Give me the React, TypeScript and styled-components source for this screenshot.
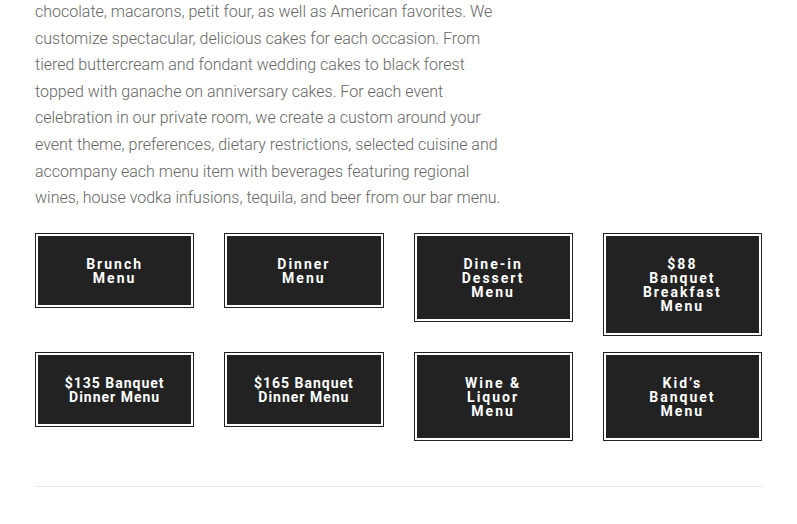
import { Fragment } from "react"
import styled, { createGlobalStyle } from "styled-components"

const GlobalStyle = createGlobalStyle`
body{
    margin: 0;
    background-color: #fff;
    font-family: Roboto, "Liberation Sans", sans-serif;
}
`

const menus = [
    { lines: ["Brunch", "Menu"] },
    { lines: ["Dinner", "Menu"] },
    { lines: ["Dine-in", "Dessert", "Menu"] },
    { lines: ["$88", "Banquet", "Breakfast", "Menu"] },
    { lines: ["$135 Banquet", "Dinner Menu"], tight: true },
    { lines: ["$165 Banquet", "Dinner Menu"], tight: true },
    { lines: ["Wine &", "Liquor", "Menu"] },
    { lines: ["Kid\u2019s", "Banquet", "Menu"] },
]

const App = () => {
    return (
        <>
            <GlobalStyle />
            <Container>
                <Intro>
                    chocolate, macarons, petit four, as well as American favorites. We
                    customize spectacular, delicious cakes for each occasion. From tiered
                    buttercream and fondant wedding cakes to black forest topped with ganache
                    on anniversary cakes. For each event celebration in our private room, we
                    create a custom around your event theme, preferences, dietary
                    restrictions, selected cuisine and accompany each menu item with
                    beverages featuring regional wines, house vodka infusions, tequila, and
                    beer from our bar menu.
                </Intro>
                <Grid>
                    {menus.map((m) => (
                        <Frame key={m.lines.join(" ")} href="#">
                            <Button tight={m.tight}>
                                {m.lines.map((l, i) => (
                                    <Fragment key={l}>
                                        {i > 0 && <br />}
                                        {l}
                                    </Fragment>
                                ))}
                            </Button>
                        </Frame>
                    ))}
                </Grid>
                <Divider />
            </Container>
        </>
    )
}

export default App

const Container = styled.div`
width: 727px;
margin: 0 35px;
padding-bottom: 37px;
`
const Intro = styled.p`
width: 475px;
margin: -1px 0 0;
font-size: 16px;
font-weight: 300;
line-height: 26.6px;
color: #666;
`
const Grid = styled.div`
display: grid;
grid-template-columns: repeat(4, 1fr);
column-gap: 30px;
row-gap: 16px;
align-items: start;
margin-top: 21px;
`
const Frame = styled.a`
display: block;
border: 1px solid #222;
padding: 2px;
text-decoration: none;
`
const Button = styled.div<{ tight?: boolean }>`
background-color: #222;
color: #fff;
padding: 21px 8px 20px;
font-size: 14px;
font-weight: 700;
line-height: 14px;
letter-spacing: ${({ tight }) => (tight ? "1px" : "2px")};
text-align: center;
`
const Divider = styled.div`
margin-top: 45px;
border-top: 1px solid #e6e6e6;
`
